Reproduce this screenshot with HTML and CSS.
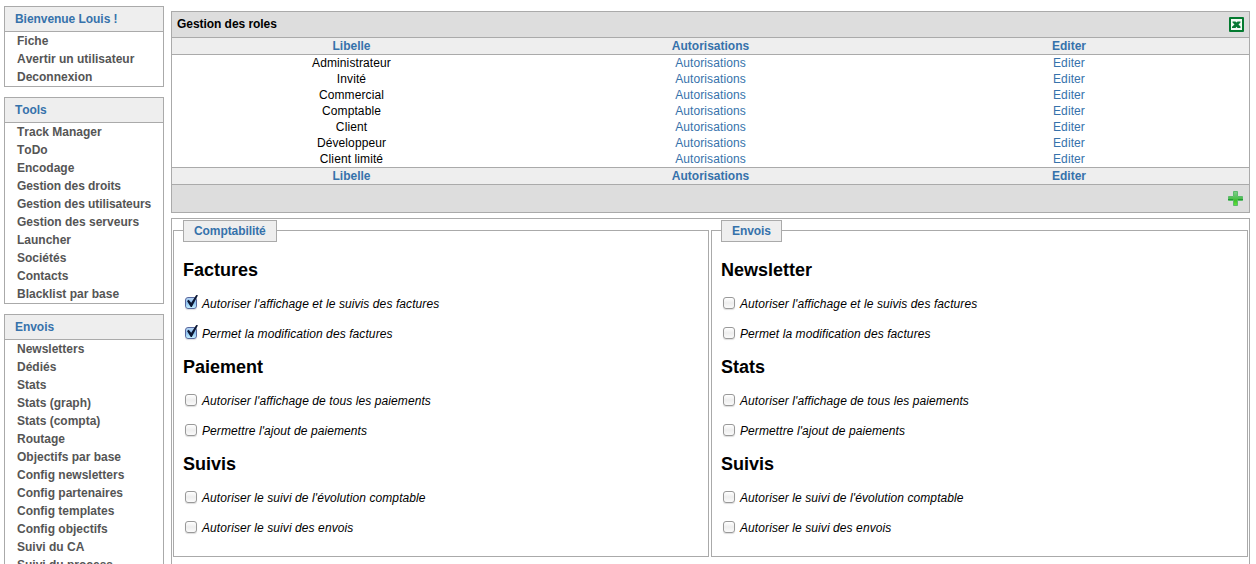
FILE: index.html
```html
<!DOCTYPE html>
<html lang="fr">
<head>
<meta charset="utf-8">
<title>Gestion des roles</title>
<link rel="stylesheet" href="styles.css">
</head>
<body>
<div class="page">
  <nav class="sidebar">
    <section class="menu">
      <h3>Bienvenue Louis !</h3>
      <ul><li>Fiche</li><li>Avertir un utilisateur</li><li>Deconnexion</li></ul>
    </section>
    <section class="menu">
      <h3>Tools</h3>
      <ul><li>Track Manager</li><li>ToDo</li><li>Encodage</li><li class="tight">Gestion des droits</li><li class="tight">Gestion des utilisateurs</li><li>Gestion des serveurs</li><li>Launcher</li><li>Sociétés</li><li>Contacts</li><li>Blacklist par base</li></ul>
    </section>
    <section class="menu">
      <h3>Envois</h3>
      <ul><li>Newsletters</li><li>Dédiés</li><li>Stats</li><li>Stats (graph)</li><li>Stats (compta)</li><li>Routage</li><li>Objectifs par base</li><li>Config newsletters</li><li>Config partenaires</li><li>Config templates</li><li>Config objectifs</li><li>Suivi du CA</li><li>Suivi du process</li></ul>
    </section>
  </nav>
  <main class="main">
    <section class="roles">
      <header class="bar">
        <span>Gestion des roles</span>
        <svg class="excel" width="15" height="15" viewBox="0 0 15 15"><rect width="15" height="15" rx="1" fill="#047a30"/><rect x="2" y="2" width="11" height="11" fill="#f4fbf5"/><path d="M3.500 4.500h3l1 1 1-1h3v1l-2 2 2 2v1.500h-3l-1-1.300-1 1.300h-3.500v-1.200l2.500-2.300-2-2z" fill="#087a34"/></svg>
      </header>
      <div class="row head"><span>Libelle</span><span>Autorisations</span><span>Editer</span></div>
      <div class="row"><span>Administrateur</span><a>Autorisations</a><a>Editer</a></div>
      <div class="row"><span>Invité</span><a>Autorisations</a><a>Editer</a></div>
      <div class="row"><span>Commercial</span><a>Autorisations</a><a>Editer</a></div>
      <div class="row"><span>Comptable</span><a>Autorisations</a><a>Editer</a></div>
      <div class="row"><span>Client</span><a>Autorisations</a><a>Editer</a></div>
      <div class="row"><span>Développeur</span><a>Autorisations</a><a>Editer</a></div>
      <div class="row"><span>Client limité</span><a>Autorisations</a><a>Editer</a></div>
      <div class="row head"><span>Libelle</span><span>Autorisations</span><span>Editer</span></div>
      <footer class="bar foot">
        <svg class="plus" width="15" height="15" viewBox="0 0 15 15"><defs><linearGradient id="g" x1="0" y1="0" x2="0" y2="1"><stop offset="0" stop-color="#7fd08a"/><stop offset=".5" stop-color="#4fc04f"/><stop offset=".62" stop-color="#3fbe2c"/><stop offset="1" stop-color="#62e63a"/></linearGradient></defs><path d="M5.500.5h4v5h5v4h-5v5h-4v-5h-5v-4h5z" fill="url(#g)" stroke="#5cba6c" stroke-width="1"/><path d="M0 8.500h5M10 8.500h5" stroke="#229a35"/></svg>
      </footer>
    </section>
    <section class="rights">
      <fieldset>
        <legend>Comptabilité</legend>
        <h2>Factures</h2>
        <label><input type="checkbox" checked><i>Autoriser l'affichage et le suivis des factures</i></label>
        <label><input type="checkbox" checked><i>Permet la modification des factures</i></label>
        <h2>Paiement</h2>
        <label><input type="checkbox"><i>Autoriser l'affichage de tous les paiements</i></label>
        <label><input type="checkbox"><i>Permettre l'ajout de paiements</i></label>
        <h2>Suivis</h2>
        <label><input type="checkbox"><i>Autoriser le suivi de l'évolution comptable</i></label>
        <label><input type="checkbox"><i>Autoriser le suivi des envois</i></label>
      </fieldset>
      <fieldset>
        <legend>Envois</legend>
        <h2>Newsletter</h2>
        <label><input type="checkbox"><i>Autoriser l'affichage et le suivis des factures</i></label>
        <label><input type="checkbox"><i>Permet la modification des factures</i></label>
        <h2>Stats</h2>
        <label><input type="checkbox"><i>Autoriser l'affichage de tous les paiements</i></label>
        <label><input type="checkbox"><i>Permettre l'ajout de paiements</i></label>
        <h2>Suivis</h2>
        <label><input type="checkbox"><i>Autoriser le suivi de l'évolution comptable</i></label>
        <label><input type="checkbox"><i>Autoriser le suivi des envois</i></label>
      </fieldset>
    </section>
  </main>
</div>
</body>
</html>
```
FILE: styles.css
```css
* { box-sizing: border-box; }
html, body { height: 100%; }
body { margin: 0; overflow: hidden; background: #fff; color: #000; font: 12px/16px "Liberation Sans", Arial, sans-serif; font-kerning: none; }
.page { display: flex; gap: 7px; padding: 6px 6px 0 4px; height: 564px; overflow: hidden; }
.sidebar { width: 160px; flex: none; display: flex; flex-direction: column; gap: 10px; }
.menu { flex: none; border: 1px solid #aaa; }
.menu h3 { margin: 0; height: 25px; padding-left: 10px; border-bottom: 1px solid #aaa; background: #eee; color: #3672ab; font-size: 12px; line-height: 24px; letter-spacing: -0.05px; }
.menu ul { margin: 0; padding: 0; list-style: none; }
.menu li { height: 18px; padding-left: 12px; line-height: 18px; font-weight: bold; color: #555; white-space: nowrap; }
.menu .tight { letter-spacing: -0.08px; }
.main { flex: 1; padding-top: 5px; }
.roles { border: 1px solid #aaa; margin-bottom: 5px; }
.bar { display: flex; align-items: center; justify-content: space-between; height: 25px; padding: 0 5px; background: #ddd; font-weight: bold; letter-spacing: -0.05px; }
.bar span { padding-bottom: 2px; }
.foot { height: 27px; justify-content: flex-end; }
.plus { margin-right: 1px; }
.row { display: grid; grid-template-columns: 359px 359px 358px; text-align: center; height: 16px; letter-spacing: 0.1px; }
.row a { color: #3672ab; }
.head { height: 18px; border: solid #aaa; border-width: 1px 0; background: #eee; color: #3672ab; font-weight: bold; letter-spacing: 0; }
.rights { display: grid; grid-template-columns: 536px 537px; gap: 2px; border: 1px solid #aaa; padding: 1px; height: 400px; align-items: start; }
fieldset { margin: 10px 0 0; min-width: 0; height: 327px; padding: 9px 9px 0; border: 1px solid #aaa; }
legend { float: left; margin: -20px 0 9px; height: 22px; padding: 0 10px; border: 1px solid #aaa; background: #eee; color: #3672ab; font-weight: bold; line-height: 20px; letter-spacing: -0.08px; }
h2 { clear: both; margin: 0; height: 37px; font-size: 18px; line-height: 39px; }
label { display: flex; align-items: center; height: 30px; padding-left: 2px; gap: 5px; }
label i { padding-top: 2px; letter-spacing: 0.09px; }
input { appearance: none; position: relative; flex: none; width: 12px; height: 12px; margin: 0; border: 1px solid #999; border-radius: 3px; background: linear-gradient(#fff, #eee 50%, #fafafa); box-shadow: 0 1px 1px #ddd; }
input:checked { border-color: #59699e; background: linear-gradient(#b4d3f4, #8fc2f0 50%, #c4f0ff); }
input:checked::after { content: ""; position: absolute; left: 1px; top: -3px; width: 11px; height: 12px; background: #0b1733; clip-path: polygon(0 50%, 16% 40%, 38% 64%, 84% 0, 100% 2%, 44% 100%, 34% 100%); }
```
